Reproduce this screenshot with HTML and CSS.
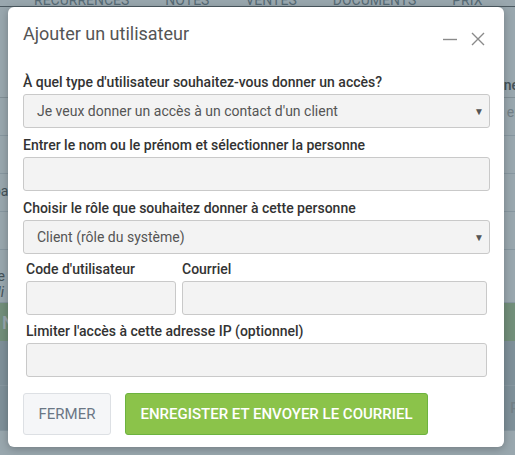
FILE: index.html
```html
<!DOCTYPE html>
<html>
<head>
	<title>Ajouter un utilisateur</title>
	<link rel="stylesheet" href="styles.css">
</head>
<body>
	<div class="page">
		<div class="tabs">
			<span class="tab-cut">T</span>
			<span>RECURRENCES</span>
			<span>NOTES</span>
			<span>VENTES</span>
			<span>DOCUMENTS</span>
			<span>PRIX</span>
			<span>S</span>
		</div>
		<div class="rows">
			<div class="row row-head"><span class="right">ne</span></div>
			<div class="row"><span class="right muted">er</span></div>
			<div class="row"></div>
			<div class="row"><span class="left">pa</span></div>
			<div class="row"></div>
			<div class="row row-tall"><span class="left">re<br><i>di</i></span></div>
			<div class="row row-green"><span class="left">N</span></div>
			<div class="row row-dark"></div>
			<div class="row row-dark"><span class="right">R</span></div>
		</div>
	</div>

	<div class="overlay"></div>

	<div class="modal">
		<div class="modal-header">
			<h2>Ajouter un utilisateur</h2>
			<div class="modal-tools">
				<svg width="16" height="16" viewBox="0 0 16 16"><path d="M1 8.5h14" stroke="#8a8a8a" stroke-width="1.4"/></svg>
				<svg width="16" height="16" viewBox="0 0 16 16"><path d="M2 2l12 12M14 2L2 14" stroke="#8a8a8a" stroke-width="1.4"/></svg>
			</div>
		</div>

		<form class="modal-body">
			<label class="field-label">À quel type d'utilisateur souhaitez-vous donner un accès?</label>
			<div class="select">
				<span>Je veux donner un accès à un contact d'un client</span>
				<span class="caret">▼</span>
			</div>

			<label class="field-label">Entrer le nom ou le prénom et sélectionner la personne</label>
			<div class="input"></div>

			<label class="field-label">Choisir le rôle que souhaitez donner à cette personne</label>
			<div class="select">
				<span>Client (rôle du système)</span>
				<span class="caret">▼</span>
			</div>

			<div class="split">
				<div class="col col-code">
					<label class="field-label">Code d'utilisateur</label>
					<div class="input"></div>
				</div>
				<div class="col col-mail">
					<label class="field-label">Courriel</label>
					<div class="input"></div>
				</div>
			</div>

			<div class="indent">
				<label class="field-label">Limiter l'accès à cette adresse IP (optionnel)</label>
				<div class="input"></div>
			</div>

			<div class="actions">
				<button type="button" class="btn btn-close">FERMER</button>
				<button type="button" class="btn btn-save">ENREGISTER ET ENVOYER LE COURRIEL</button>
			</div>
		</form>
	</div>
</body>
</html>
```

FILE: styles.css
```css
body {
	margin: 0;
	font-family: Roboto, "Liberation Sans", Arial, sans-serif;
	width: 515px;
	height: 455px;
	overflow: hidden;
	position: relative;
	background: #fff;
}

/* page behind the dialog */
.page {
	height: 455px;
	color: #555;
}

.tabs {
	display: flex;
	gap: 36px;
	height: 6px;
	overflow: hidden;
	border-bottom: 1px solid #555;
	font-size: 14px;
	line-height: 0;
	padding-left: 38px;
}

.tabs span {
	display: block;
	color: #6c7880;
	line-height: 0;
	white-space: nowrap;
}

.tabs .tab-cut {
	margin-left: -40px;
	width: 4px;
	overflow: hidden;
}

.rows {
	padding-top: 64px;
}

.row {
	height: 37px;
	border-bottom: 1px solid #d8dcdf;
	position: relative;
	font-size: 14px;
}

.row-head {
	height: 26px;
	border-bottom: 1px solid #ccc;
}

.row-tall {
	height: 52px;
}

.row-green {
	height: 38px;
	background: #a9c98d;
	border: none;
}

.row-dark {
	height: 44px;
	background: #c4ccd0;
}

.left {
	position: absolute;
	left: -7px;
	top: 9px;
	color: #444;
}

.row-tall .left {
	top: 18px;
}

.row-green .left {
	color: #fff;
	left: 2px;
	font-weight: 500;
	font-size: 18px;
	top: 9px;
}

.right {
	position: absolute;
	right: -4px;
	top: 6px;
	color: #444;
	font-weight: 500;
}

.right.muted {
	color: #aaa;
	font-weight: 400;
}

.row-dark .right {
	color: #aaa;
	top: 14px;
}

.overlay {
	position: absolute;
	inset: 0;
	background: rgba(70, 95, 108, 0.55);
}

/* dialog */
.modal {
	position: absolute;
	left: 8px;
	top: 7px;
	width: 496px;
	height: 440px;
	background: #fff;
	border-radius: 6px;
	box-shadow: 0 2px 8px rgba(0, 0, 0, 0.25);
	box-sizing: border-box;
}

.modal-header {
	display: flex;
	align-items: center;
	justify-content: space-between;
	padding: 12px 18px 0 15px;
	height: 48px;
	box-sizing: border-box;
}

.modal-header h2 {
	margin: -6px 0 0;
	font-size: 18px;
	font-weight: 400;
	color: #555;
	line-height: 20px;
}

.modal-tools {
	display: flex;
	gap: 12px;
	margin-top: 4px;
}

.modal-body {
	padding: 17px 14px 0 15px;
	display: flex;
	flex-direction: column;
}

.field-label {
	display: block;
	font-size: 14px;
	font-weight: 500;
	color: #333;
	line-height: 20px;
	margin-bottom: 2px;
}

.select,
.input {
	height: 34px;
	box-sizing: border-box;
	background: #f3f3f3;
	border: 1px solid #c9c9c9;
	border-radius: 3px;
	margin-bottom: 7px;
}

.select {
	display: flex;
	align-items: center;
	justify-content: space-between;
	padding: 0 5px 0 13px;
	font-size: 14px;
	color: #555;
}

.caret {
	font-size: 10px;
	color: #555;
}

.split {
	display: flex;
	gap: 6px;
	margin-top: -2px;
	padding: 0 3px;
}

.col-code {
	width: 150px;
}

.col-mail {
	flex: 1;
}

.split .input {
	margin-bottom: 6px;
}

.indent {
	padding: 0 3px;
}

.actions {
	display: flex;
	gap: 14px;
	margin-top: 9px;
}

.btn {
	height: 42px;
	box-sizing: border-box;
	font-family: inherit;
	font-size: 15px;
	border-radius: 3px;
	cursor: pointer;
}

.btn-close {
	width: 88px;
	background: #f5f6f8;
	border: 1px solid #dde0e4;
	color: #6b7785;
}

.btn-save {
	width: 303px;
	background: #8bc34a;
	border: 1px solid #6db33f;
	color: #fff;
	font-weight: 500;
}
```
